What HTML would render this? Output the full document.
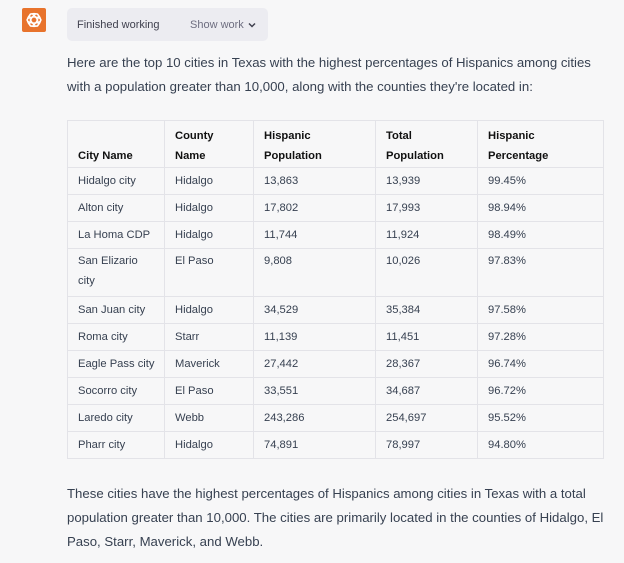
<!DOCTYPE html>
<html><head><style>
body{margin:0;width:624px;height:563px;background:#f7f7f8;font-family:"Liberation Sans",sans-serif;color:#374151;overflow:hidden;position:relative}
.logo{position:absolute;left:22px;top:8px;width:24px;height:24px;background:#e8732c;border-radius:2px}
.fw{position:absolute;left:67px;top:8px;width:201px;height:33px;background:#ececf1;border-radius:5px;font-size:11px;color:#40414f}
.fw .a{position:absolute;left:10px;top:11px}
.fw .b{position:absolute;left:123px;top:11px;color:#6e6e80}
.p{position:absolute;left:67px;font-size:13.2px;line-height:24px;color:#374151;width:540px}
table{position:absolute;left:67px;top:120px;border-collapse:collapse;table-layout:fixed;font-size:11.2px;width:536px;background:#f7f7f8}
td,th{border:1px solid #e3e3e8;padding:0 10px;text-align:left;line-height:20px;vertical-align:middle;white-space:nowrap;overflow:hidden}
th{color:#111;font-weight:bold;height:45px;vertical-align:bottom;padding-bottom:1px}
td{height:26px}
.s td{height:45px;vertical-align:top;padding-top:2px}
</style></head><body>
<div class="logo"><svg width="24" height="24" viewBox="0 0 24 24" fill="none" stroke="#fff" stroke-width="1.3"><circle cx="12" cy="12" r="6.5"/><ellipse cx="12" cy="12" rx="7" ry="3" transform="rotate(60 12 12)"/><ellipse cx="12" cy="12" rx="7" ry="3" transform="rotate(-60 12 12)"/><ellipse cx="12" cy="12" rx="7" ry="3"/></svg></div>
<div class="fw"><span class="a">Finished working</span><span class="b">Show work</span><svg style="position:absolute;left:180px;top:12px" width="10" height="10" viewBox="0 0 10 10"><path d="M2 3.5L5 6.5L8 3.5" stroke="#40414f" stroke-width="1.5" fill="none"/></svg></div>
<div class="p" style="top:51px">Here are the top 10 cities in Texas with the highest percentages of Hispanics among cities with a population greater than 10,000, along with the counties they're located in:</div>
<table>
<colgroup><col style="width:97px"><col style="width:89px"><col style="width:122px"><col style="width:102px"><col style="width:126px"></colgroup>
<tr><th>City Name</th><th>County<br>Name</th><th>Hispanic<br>Population</th><th>Total<br>Population</th><th>Hispanic<br>Percentage</th></tr>
<tr><td>Hidalgo city</td><td>Hidalgo</td><td>13,863</td><td>13,939</td><td>99.45%</td></tr>
<tr><td>Alton city</td><td>Hidalgo</td><td>17,802</td><td>17,993</td><td>98.94%</td></tr>
<tr><td>La Homa CDP</td><td>Hidalgo</td><td>11,744</td><td>11,924</td><td>98.49%</td></tr>
<tr class="s"><td>San Elizario<br>city</td><td>El Paso</td><td>9,808</td><td>10,026</td><td>97.83%</td></tr>
<tr><td>San Juan city</td><td>Hidalgo</td><td>34,529</td><td>35,384</td><td>97.58%</td></tr>
<tr><td>Roma city</td><td>Starr</td><td>11,139</td><td>11,451</td><td>97.28%</td></tr>
<tr><td>Eagle Pass city</td><td>Maverick</td><td>27,442</td><td>28,367</td><td>96.74%</td></tr>
<tr><td>Socorro city</td><td>El Paso</td><td>33,551</td><td>34,687</td><td>96.72%</td></tr>
<tr><td>Laredo city</td><td>Webb</td><td>243,286</td><td>254,697</td><td>95.52%</td></tr>
<tr><td>Pharr city</td><td>Hidalgo</td><td>74,891</td><td>78,997</td><td>94.80%</td></tr>
</table>
<div class="p" style="top:482px">These cities have the highest percentages of Hispanics among cities in Texas with a total population greater than 10,000. The cities are primarily located in the counties of Hidalgo, El Paso, Starr, Maverick, and Webb.</div>
</body></html>
